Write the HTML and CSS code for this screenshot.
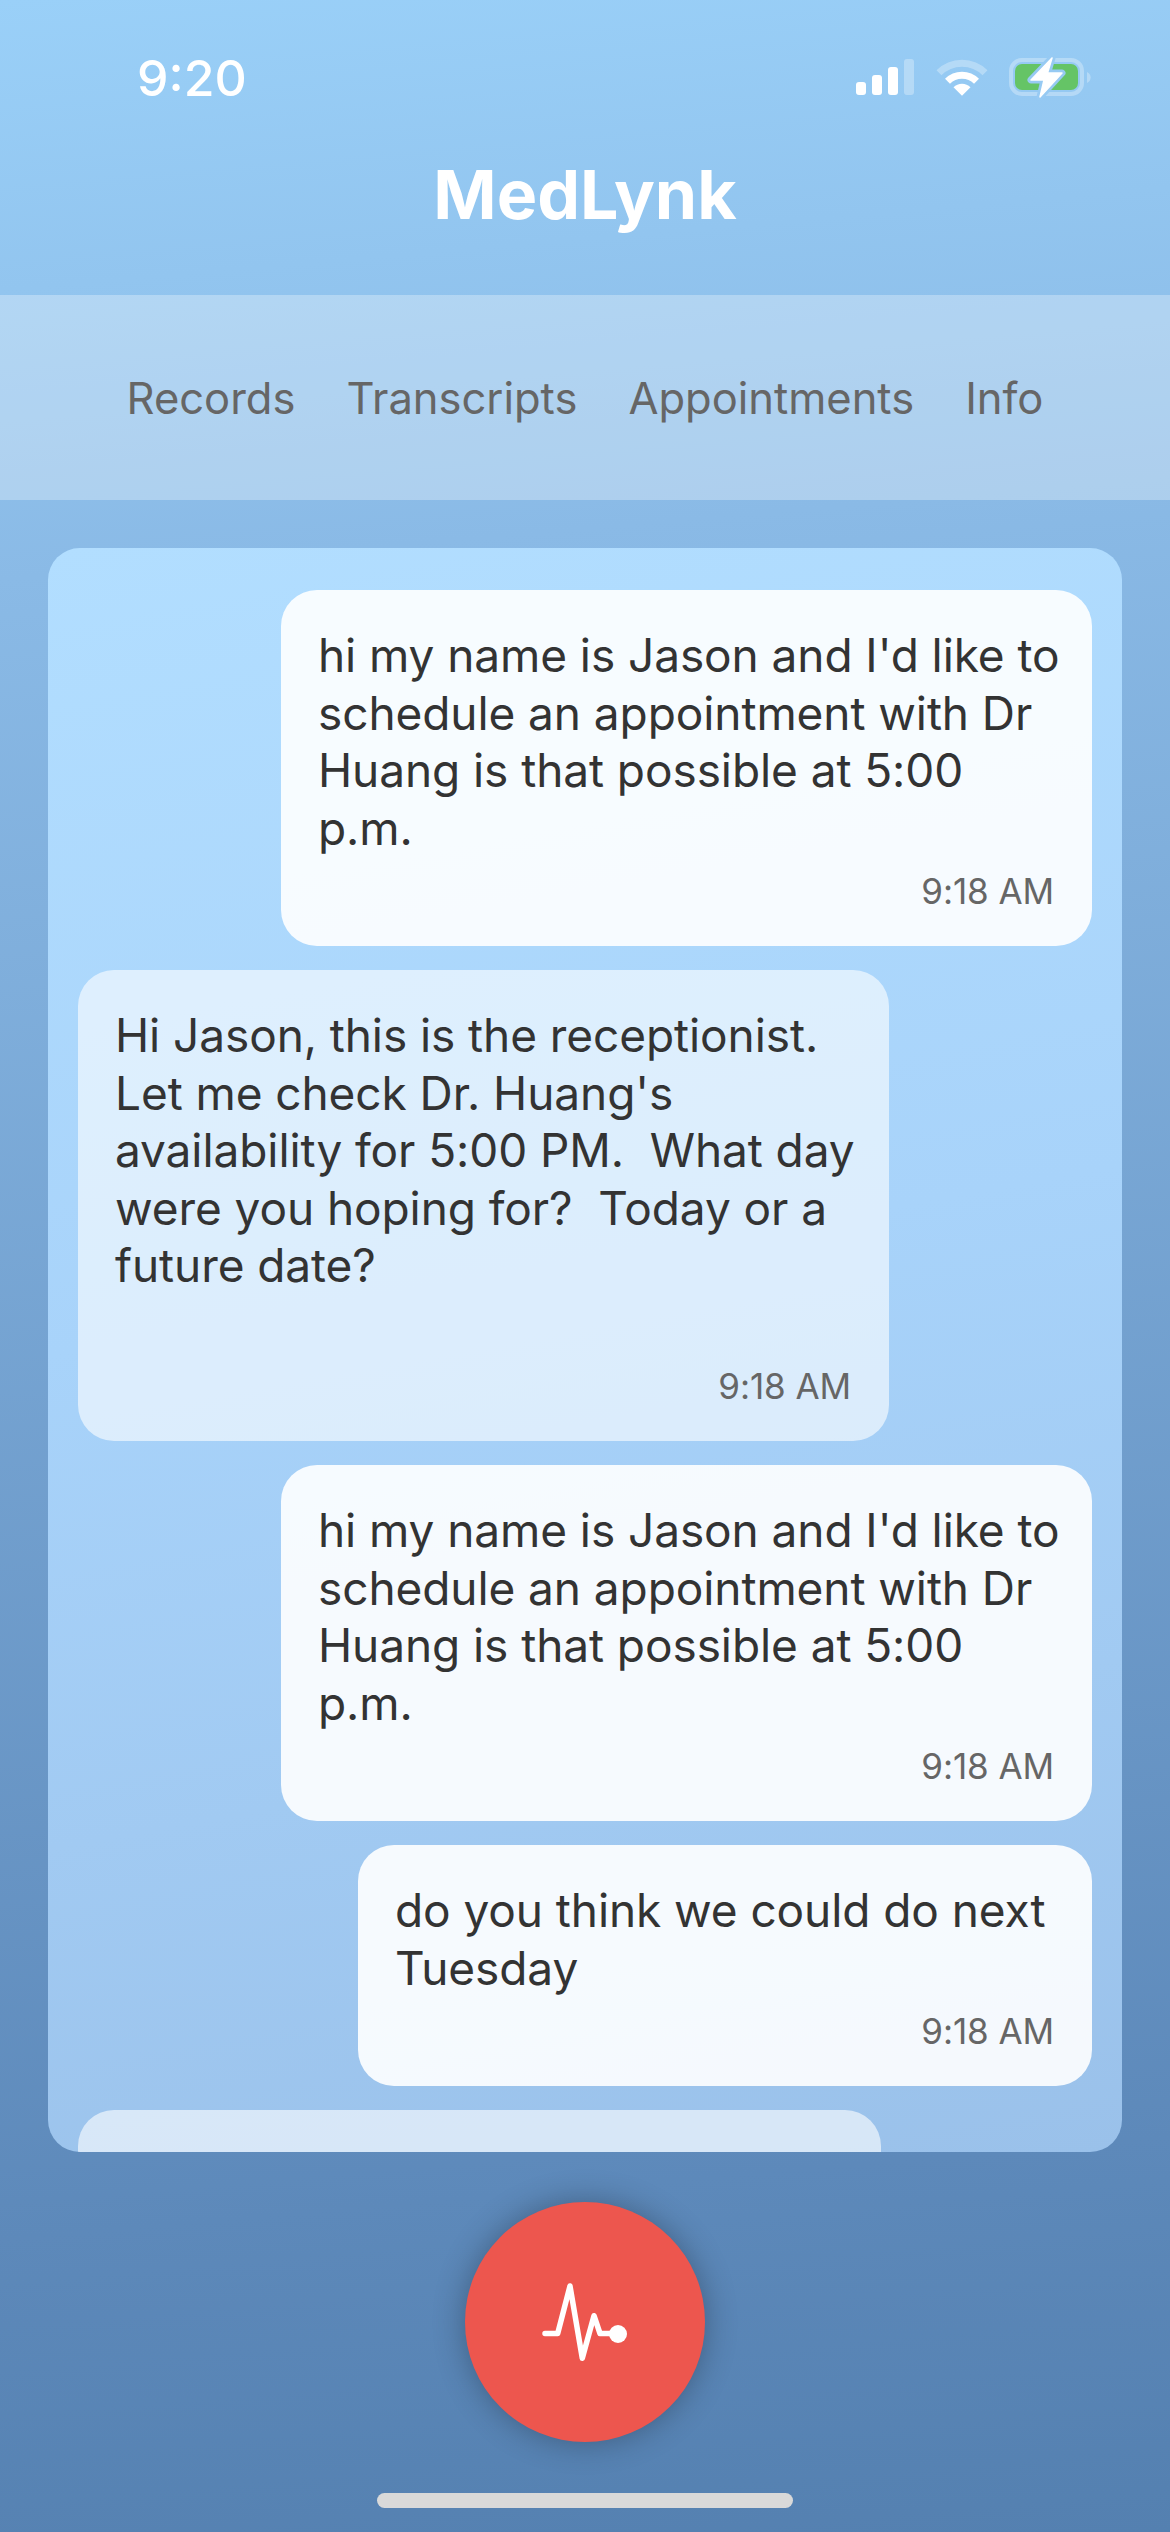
FILE: index.html
```html
<!DOCTYPE html>
<html>
<head>
  <meta charset="utf-8">
  <title>MedLynk</title>
  <link rel="stylesheet" href="styles.css">
</head>
<body>
  <div class="screen">
    <div class="status-bar">
      <span class="clock">9:20</span>
      <svg class="status-icons" viewBox="856 56 236 44" width="236" height="44">
        <rect x="856" y="82" width="10" height="13" rx="3" fill="#fff"/>
        <rect x="872" y="75" width="10" height="20" rx="3" fill="#fff"/>
        <rect x="888" y="67" width="10" height="28" rx="3" fill="#fff"/>
        <rect x="904" y="59" width="10" height="36" rx="3" fill="#fff" opacity="0.3"/>
        <path d="M939 72.7A32.5 32.5 0 0 1 985 72.7" fill="none" stroke="#fff" stroke-width="7" opacity="0.3"/>
        <path d="M947.5 81.2A20.5 20.5 0 0 1 976.5 81.2" fill="none" stroke="#fff" stroke-width="7"/>
        <path d="M962 95.7L953.5 87.2A12 12 0 0 1 970.5 87.2Z" fill="#fff"/>
        <rect x="1011" y="60" width="71" height="34" rx="11" fill="none" stroke="#fff" stroke-width="4" opacity="0.3"/>
        <rect x="1015" y="64" width="63" height="26" rx="7" fill="#65c466"/>
        <path d="M1087 72A6 6 0 0 1 1087 83Z" fill="#fff" opacity="0.3"/>
        <path d="M1052 58L1031 80H1044L1040 97L1062 73H1047.500Z" fill="#fff" stroke="#97caf3" stroke-width="7" stroke-linejoin="round" paint-order="stroke"/>
        <path d="M1052 58L1031 80H1044L1040 97L1062 73H1047.500Z" fill="#fff" stroke="#fff" stroke-width="1.500" stroke-linejoin="round"/>
      </svg>
    </div>
    <h1 class="title">MedLynk</h1>
    <nav class="tabs">
      <a class="tab">Records</a>
      <a class="tab">Transcripts</a>
      <a class="tab">Appointments</a>
      <a class="tab">Info</a>
    </nav>
    <div class="chat">
      <div class="msg msg-me">
        <div class="msg-text">hi my name is Jason and I'd like to schedule an appointment with Dr Huang is that possible at 5:00 p.m.</div>
        <div class="msg-time">9:18 AM</div>
      </div>
      <div class="msg msg-them">
        <div class="msg-text">Hi Jason, this is the receptionist.  Let me check Dr. Huang's availability for 5:00 PM.  What day were you hoping for?  Today or a future date?<br><br></div>
        <div class="msg-time">9:18 AM</div>
      </div>
      <div class="msg msg-me">
        <div class="msg-text">hi my name is Jason and I'd like to schedule an appointment with Dr Huang is that possible at 5:00 p.m.</div>
        <div class="msg-time">9:18 AM</div>
      </div>
      <div class="msg msg-me msg-short">
        <div class="msg-text">do you think we could do next Tuesday</div>
        <div class="msg-time">9:18 AM</div>
      </div>
      <div class="msg msg-them msg-cut"></div>
    </div>
    <div class="record-wrap">
      <button class="record-btn">
        <svg viewBox="0 0 90 90" width="90" height="90">
          <path d="M5 56.500H17.700L30 9L42.300 81.300L54 38.700L60 56.500H78" fill="none" stroke="#fff" stroke-width="5.500" stroke-linecap="round" stroke-linejoin="round"/>
          <circle cx="78" cy="57" r="9" fill="#fff"/>
        </svg>
      </button>
    </div>
    <div class="home-bar"></div>
  </div>
</body>
</html>
```

FILE: styles.css
```css
* {
  box-sizing: border-box;
}
body {
  margin: 0;
  font-family: Inter, "Liberation Sans", sans-serif;
}
.screen {
  width: 1170px;
  height: 2532px;
  overflow: hidden;
  display: flex;
  flex-direction: column;
  background: linear-gradient(175deg, #9ad0f8 0%, #8abae6 22%, #5d89ba 85%, #5480b0 100%);
}
.status-bar {
  height: 128px;
  padding: 56px 78px 0 137px;
  display: flex;
  justify-content: space-between;
  align-items: flex-start;
}
.clock {
  color: white;
  font-size: 50px;
  font-weight: 500;
  line-height: 44px;
}
.title {
  height: 167px;
  margin: 0;
  padding-top: 25px;
  color: white;
  font-size: 68px;
  font-weight: 700;
  line-height: 82px;
  text-align: center;
}
.tabs {
  height: 205px;
  display: flex;
  justify-content: center;
  align-items: center;
  gap: 51px;
  background: rgba(255,255,255,0.3);
}
.tab {
  color: #666;
  font-size: 43.500px;
  line-height: 52px;
}
.chat {
  height: 1604px;
  margin: 48px 48px 0;
  padding: 42px 30px 0;
  display: flex;
  flex-direction: column;
  gap: 24px;
  overflow: hidden;
  border-radius: 32px;
  background: linear-gradient(170deg, #b2deff 0%, #a8d3fa 45%, #9ac1ea 100%);
}
.msg {
  flex: none;
  width: fit-content;
  max-width: 811px;
  padding: 37px 30px 35px 37px;
  border-radius: 36px;
  color: #333;
  font-size: 46px;
  line-height: 57.500px;
  letter-spacing: -0.080px;
}
.msg-me {
  align-self: flex-end;
  background: rgba(255,255,255,0.9);
}
.msg-them {
  align-self: flex-start;
  background: rgba(255,255,255,0.6);
}
.msg-short {
  width: 734px;
}
.msg-cut {
  width: 803px;
  height: 120px;
}
.msg-text {
  white-space: pre-wrap;
}
.msg-time {
  margin-top: 14px;
  padding-right: 8px;
  color: #666;
  font-size: 35px;
  line-height: 40px;
  text-align: right;
}
.record-wrap {
  margin-top: 50px;
  display: flex;
  justify-content: center;
}
.record-btn {
  width: 240px;
  height: 240px;
  padding: 0;
  border: none;
  border-radius: 50%;
  display: flex;
  justify-content: center;
  align-items: center;
  background: #ed564e;
  box-shadow: 0 0 32px rgba(0,0,0,0.3);
}
.home-bar {
  width: 416px;
  height: 15px;
  margin: 51px auto 0;
  border-radius: 8px;
  background: #d9d9d9;
}
```
